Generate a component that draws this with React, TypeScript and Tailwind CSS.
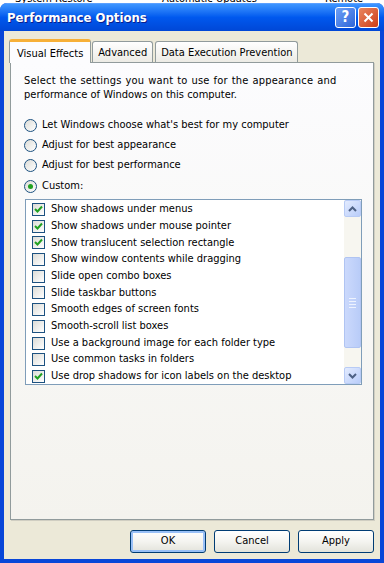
import React from "react";

const items: [string, boolean][] = [
  ["Show shadows under menus", true],
  ["Show shadows under mouse pointer", true],
  ["Show translucent selection rectangle", true],
  ["Show window contents while dragging", false],
  ["Slide open combo boxes", false],
  ["Slide taskbar buttons", false],
  ["Smooth edges of screen fonts", false],
  ["Smooth-scroll list boxes", false],
  ["Use a background image for each folder type", false],
  ["Use common tasks in folders", false],
  ["Use drop shadows for icon labels on the desktop", true],
];

function Check({ on }: { on: boolean }) {
  return (
    <div className="w-[13px] h-[13px] shrink-0 border border-[#1c5180] bg-gradient-to-br from-[#dcdcd7] to-[#ffffff] flex items-center justify-center">
      {on && (
        <svg width="9" height="9" viewBox="0 0 9 9">
          <path d="M1 4 L3.5 6.5 L8 1.5" stroke="#21a121" strokeWidth="2" fill="none" />
        </svg>
      )}
    </div>
  );
}

function Radio({ on, label }: { on: boolean; label: string }) {
  return (
    <div className="flex items-center h-[20.3px] gap-[5px]">
      <div className="w-[13px] h-[13px] rounded-full border border-[#1c5180] bg-gradient-to-br from-[#dcdcd7] to-[#ffffff] flex items-center justify-center">
        {on && <div className="w-[5px] h-[5px] rounded-full bg-[#21a121]" />}
      </div>
      <span>{label}</span>
    </div>
  );
}

function Btn({ label, def }: { label: string; def?: boolean }) {
  return (
    <div
      className={
        "w-[76px] h-[23px] rounded-[3px] border border-[#003c74] bg-gradient-to-b from-[#ffffff] via-[#f4f4f0] to-[#e3e3db] flex items-center justify-center " +
        (def ? "shadow-[inset_0_0_0_2px_#99c0f7]" : "")
      }
    >
      {label}
    </div>
  );
}

export default function App() {
  return (
    <div
      className="w-[384px] h-[563px] bg-white overflow-hidden flex flex-col text-[11px] text-black"
      style={{ fontFamily: '"DejaVu Sans Condensed", "Liberation Sans", sans-serif' }}
    >
      <div className="h-[3px] relative overflow-hidden shrink-0">
        <div className="absolute left-[15px] -top-[9px]">System Restore</div>
        <div className="absolute left-[162px] -top-[9px]">Automatic Updates</div>
        <div className="absolute left-[325px] -top-[9px]">Remote</div>
      </div>
      <div className="flex-1 flex flex-col rounded-t-[7px] bg-[#0846d8] overflow-hidden">
        <div className="h-[28px] shrink-0 flex items-center px-[7px] bg-gradient-to-b from-[#3d95ff] via-[#0058ee] to-[#0047d6] border-t border-[#5ba0ff]">
          <span className="text-white font-bold text-[13px] flex-1 [text-shadow:1px_1px_0_#0a1e8c]">
            Performance Options
          </span>
          <div className="flex gap-[2px] mr-[-2px]">
            <div className="w-[21px] h-[21px] rounded-[3px] border border-white bg-gradient-to-br from-[#6ea0f6] to-[#2e64d8] flex items-center justify-center text-white font-bold text-[15px]">
              ?
            </div>
            <div className="w-[21px] h-[21px] rounded-[3px] border border-white bg-gradient-to-br from-[#e9855e] to-[#cc3a12] flex items-center justify-center">
              <svg width="11" height="11" viewBox="0 0 11 11">
                <path d="M1.5 1.5 L9.5 9.5 M9.5 1.5 L1.5 9.5" stroke="white" strokeWidth="2" />
              </svg>
            </div>
          </div>
        </div>
        <div className="flex-1 mx-[4px] mb-[4px] bg-[#ece9d8] flex flex-col px-[6px] pt-[7px]">
          <div className="flex items-end h-[24px] relative z-10 -ml-[1px]">
            <div className="h-[24px] px-[7px] pt-[4px] bg-[#fcfcfe] border-x border-[#919b9c] rounded-t-[3px] border-t-[3px] border-t-[#f7b038] mb-[-1px]">
              Visual Effects
            </div>
            <div className="h-[21px] px-[5px] pt-[3px] bg-gradient-to-b from-white to-[#ecebe5] border border-b-0 border-[#919b9c] rounded-t-[3px] ml-[1px]">
              Advanced
            </div>
            <div className="h-[21px] px-[5px] pt-[3px] bg-gradient-to-b from-white to-[#ecebe5] border border-b-0 border-[#919b9c] rounded-t-[3px] ml-[2px]">
              Data Execution Prevention
            </div>
          </div>
          <div className="h-[458px] border border-[#919b9c] bg-gradient-to-b from-[#fcfcfe] to-[#f4f3ee] shadow-[1px_1px_0_#d0cec2] pl-[13px] pr-[12px] pt-[11px]">
            <div className="leading-[14px]">
              <div className="tracking-[0.2px] [word-spacing:0.6px]">Select the settings you want to use for the appearance and</div>
              <div>performance of Windows on this computer.</div>
            </div>
            <div className="mt-[13px] flex flex-col">
              <Radio on={false} label="Let Windows choose what's best for my computer" />
              <Radio on={false} label="Adjust for best appearance" />
              <Radio on={false} label="Adjust for best performance" />
              <Radio on={true} label="Custom:" />
            </div>
            <div className="mt-[3px] ml-[1px] w-[337px] h-[186px] border border-[#7f9db9] bg-white flex">
              <div className="flex-1 pt-[1px] overflow-hidden">
                {items.map(([t, on]) => (
                  <div key={t} className="h-[16.7px] flex items-center pl-[6px] gap-[6px] whitespace-nowrap">
                    <Check on={on} />
                    <span>{t}</span>
                  </div>
                ))}
              </div>
              <div className="w-[17px] bg-[#f7f6f0] flex flex-col">
                <div className="h-[17px] rounded-[2px] border border-[#b8cbf5] bg-gradient-to-br from-[#e3ebfe] to-[#b9cdfa] flex items-center justify-center">
                  <svg width="9" height="6" viewBox="0 0 9 6">
                    <path d="M1 5 L4.5 1.5 L8 5" stroke="#4d6185" strokeWidth="2" fill="none" />
                  </svg>
                </div>
                <div className="flex-1 flex flex-col pt-[40px] pb-[19px]">
                  <div className="flex-1 rounded-[2px] border border-[#b0c4f2] bg-gradient-to-r from-[#cbd9fc] to-[#b9ccf8] flex flex-col items-center justify-center gap-[2px]">
                    <div className="w-[7px] h-[1px] bg-[#eef3fe]" />
                    <div className="w-[7px] h-[1px] bg-[#eef3fe]" />
                    <div className="w-[7px] h-[1px] bg-[#eef3fe]" />
                    <div className="w-[7px] h-[1px] bg-[#eef3fe]" />
                  </div>
                </div>
                <div className="h-[17px] rounded-[2px] border border-[#b8cbf5] bg-gradient-to-br from-[#e3ebfe] to-[#b9cdfa] flex items-center justify-center">
                  <svg width="9" height="6" viewBox="0 0 9 6">
                    <path d="M1 1 L4.5 4.5 L8 1" stroke="#4d6185" strokeWidth="2" fill="none" />
                  </svg>
                </div>
              </div>
            </div>
          </div>
          <div className="flex justify-end gap-[8px] mt-[10px]">
            <Btn label="OK" def />
            <Btn label="Cancel" />
            <Btn label="Apply" />
          </div>
        </div>
      </div>
    </div>
  );
}
